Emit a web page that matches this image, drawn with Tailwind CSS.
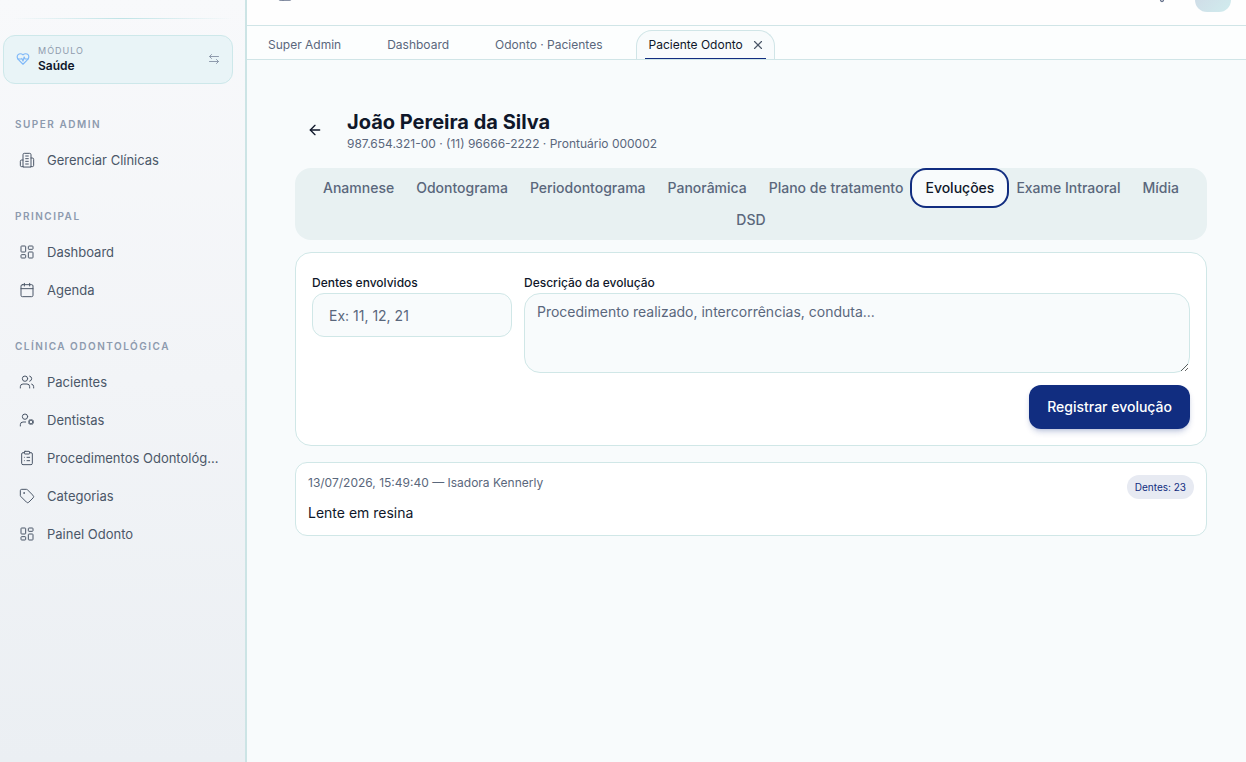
<!DOCTYPE html>
<html lang="pt-BR">
<head>
    <meta charset="UTF-8">
    <meta name="viewport" content="width=device-width, initial-scale=1.0">
    <title>Paciente Odonto</title>
    <script src="https://cdn.jsdelivr.net/npm/@tailwindcss/browser@4"></script>
</head>
<body class="font-['Inter',sans-serif] bg-[#f8fbfc] text-[#0f172a] overflow-hidden">

    <!-- Ícones reutilizados no menu -->
    <svg class="hidden">
        <symbol id="icon-dashboard" viewBox="0 0 24 24">
            <rect width="7" height="9" x="3" y="3" rx="1"/><rect width="7" height="5" x="14" y="3" rx="1"/>
            <rect width="7" height="9" x="14" y="12" rx="1"/><rect width="7" height="5" x="3" y="16" rx="1"/>
        </symbol>
    </svg>

    <div class="flex min-h-screen">
        <!-- Menu lateral -->
        <aside class="w-[247px] shrink-0 border-r-2 border-[#cce4e5] bg-linear-to-b from-[#f8f9fb] via-[#f2f4f7] to-[#ebeff3]">
            <div class="mt-[18px] mx-3 h-px bg-linear-to-r from-transparent via-[#bfe3e6] to-transparent"></div>

            <button type="button" class="mt-4 ml-[3px] flex w-[230px] items-center gap-2 rounded-xl border border-[#cde8ea] bg-[#e9f4f7] px-3 pb-[9px] pt-2 text-left">
                <svg class="size-3.5 shrink-0 text-[#7fb8f8]" viewBox="0 0 24 24" fill="none" stroke="currentColor" stroke-width="2" stroke-linecap="round" stroke-linejoin="round">
                    <path d="M19 14c1.49-1.46 3-3.21 3-5.5A5.5 5.5 0 0 0 16.5 3c-1.76 0-3 .5-4.5 2-1.5-1.5-2.74-2-4.5-2A5.5 5.5 0 0 0 2 8.5c0 2.3 1.5 4.05 3 5.5l7 7Z"/>
                    <path d="M3.22 12H9.5l.5-1 2 4.5 2-7 1.5 3.5h5.27"/>
                </svg>
                <span class="flex-1">
                    <span class="block text-[9px] leading-[14px] tracking-[1px] text-[#8f9bad]">MÓDULO</span>
                    <span class="block text-xs font-semibold leading-4">Saúde</span>
                </span>
                <svg class="size-3 text-[#8f9bad]" viewBox="0 0 24 24" fill="none" stroke="currentColor" stroke-width="2" stroke-linecap="round" stroke-linejoin="round">
                    <path d="m7 3-4 4 4 4"/><path d="M3 7h18"/><path d="m17 21 4-4-4-4"/><path d="M21 17H3"/>
                </svg>
            </button>

            <nav class="mt-8 flex flex-col gap-[30px] pl-[7px] pr-2 text-[13px] leading-5 text-[#4b5768]">
                <section>
                    <h2 class="mb-[10px] px-2 text-[10px] font-semibold leading-4 tracking-[1.5px] text-[#8d9aae]">SUPER ADMIN</h2>
                    <a href="#" class="flex h-9 items-center gap-3 px-3">
                        <svg class="size-4 shrink-0" viewBox="0 0 24 24" fill="none" stroke="currentColor" stroke-width="1.5" stroke-linecap="round" stroke-linejoin="round">
                            <path d="M6 22V4a2 2 0 0 1 2-2h8a2 2 0 0 1 2 2v18Z"/><path d="M6 12H4a2 2 0 0 0-2 2v6a2 2 0 0 0 2 2h2"/>
                            <path d="M18 9h2a2 2 0 0 1 2 2v9a2 2 0 0 1-2 2h-2"/><path d="M10 6h4"/><path d="M10 10h4"/><path d="M10 14h4"/><path d="M10 18h4"/>
                        </svg>
                        <span>Gerenciar Clínicas</span>
                    </a>
                </section>

                <section>
                    <h2 class="mb-[10px] px-2 text-[10px] font-semibold leading-4 tracking-[1.5px] text-[#8d9aae]">PRINCIPAL</h2>
                    <div class="flex flex-col gap-0.5">
                        <a href="#" class="flex h-9 items-center gap-3 px-3">
                            <svg class="size-4 shrink-0" fill="none" stroke="currentColor" stroke-width="1.5" stroke-linejoin="round"><use href="#icon-dashboard"/></svg>
                            <span>Dashboard</span>
                        </a>
                        <a href="#" class="flex h-9 items-center gap-3 px-3">
                            <svg class="size-4 shrink-0" viewBox="0 0 24 24" fill="none" stroke="currentColor" stroke-width="1.5" stroke-linecap="round" stroke-linejoin="round">
                                <path d="M8 2v4"/><path d="M16 2v4"/><rect width="18" height="18" x="3" y="4" rx="2"/><path d="M3 10h18"/>
                            </svg>
                            <span>Agenda</span>
                        </a>
                    </div>
                </section>

                <section>
                    <h2 class="mb-[10px] px-2 text-[10px] font-semibold leading-4 tracking-[1.5px] text-[#8d9aae]">CLÍNICA ODONTOLÓGICA</h2>
                    <div class="flex flex-col gap-0.5">
                        <a href="#" class="flex h-9 items-center gap-3 px-3">
                            <svg class="size-4 shrink-0" viewBox="0 0 24 24" fill="none" stroke="currentColor" stroke-width="1.5" stroke-linecap="round" stroke-linejoin="round">
                                <path d="M16 21v-2a4 4 0 0 0-4-4H6a4 4 0 0 0-4 4v2"/><circle cx="9" cy="7" r="4"/><path d="M22 21v-2a4 4 0 0 0-3-3.87"/><path d="M16 3.13a4 4 0 0 1 0 7.75"/>
                            </svg>
                            <span>Pacientes</span>
                        </a>
                        <a href="#" class="flex h-9 items-center gap-3 px-3">
                            <svg class="size-4 shrink-0" viewBox="0 0 24 24" fill="none" stroke="currentColor" stroke-width="1.5" stroke-linecap="round" stroke-linejoin="round">
                                <path d="M10 15H6a4 4 0 0 0-4 4v2"/><circle cx="9" cy="7" r="4"/><circle cx="18" cy="15" r="3"/>
                                <path d="m21.7 16.4-.9-.3"/><path d="m15.2 13.9-.9-.3"/><path d="m16.6 18.7.3-.9"/><path d="m19.1 12.2.3-.9"/><path d="m19.6 18.7-.4-1"/><path d="m16.8 12.3-.4-1"/><path d="m14.3 16.6 1-.4"/><path d="m20.7 13.8 1-.4"/>
                            </svg>
                            <span>Dentistas</span>
                        </a>
                        <a href="#" class="flex h-9 items-center gap-3 px-3">
                            <svg class="size-4 shrink-0" viewBox="0 0 24 24" fill="none" stroke="currentColor" stroke-width="1.5" stroke-linecap="round" stroke-linejoin="round">
                                <rect width="8" height="4" x="8" y="2" rx="1"/><path d="M16 4h2a2 2 0 0 1 2 2v14a2 2 0 0 1-2 2H6a2 2 0 0 1-2-2V6a2 2 0 0 1 2-2h2"/>
                                <path d="M12 11h4"/><path d="M12 16h4"/><path d="M8 11h.01"/><path d="M8 16h.01"/>
                            </svg>
                            <span class="whitespace-nowrap">Procedimentos Odontológ...</span>
                        </a>
                        <a href="#" class="flex h-9 items-center gap-3 px-3">
                            <svg class="size-4 shrink-0" viewBox="0 0 24 24" fill="none" stroke="currentColor" stroke-width="1.5" stroke-linecap="round" stroke-linejoin="round">
                                <path d="M12.586 2.586A2 2 0 0 0 11.172 2H4a2 2 0 0 0-2 2v7.172a2 2 0 0 0 .586 1.414l8.704 8.704a2.426 2.426 0 0 0 3.42 0l6.58-6.58a2.426 2.426 0 0 0 0-3.42z"/>
                                <circle cx="7.5" cy="7.5" r=".5" fill="currentColor"/>
                            </svg>
                            <span>Categorias</span>
                        </a>
                        <a href="#" class="flex h-9 items-center gap-3 px-3">
                            <svg class="size-4 shrink-0" fill="none" stroke="currentColor" stroke-width="1.5" stroke-linejoin="round"><use href="#icon-dashboard"/></svg>
                            <span>Painel Odonto</span>
                        </a>
                    </div>
                </section>
            </nav>
        </aside>

        <div class="min-w-0 flex-1">
            <!-- Barra superior, parcialmente rolada -->
            <header class="-mt-[38px] flex h-16 items-center justify-between border-b border-[#d0e5e7] bg-[#fefefe] pl-[30px] pr-[15px] text-[#64708a]">
                <button type="button" aria-label="Alternar menu">
                    <svg class="size-4" viewBox="0 0 24 24" fill="none" stroke="currentColor" stroke-width="2" stroke-linecap="round" stroke-linejoin="round">
                        <rect width="18" height="18" x="3" y="3" rx="2"/><path d="M9 3v18"/>
                    </svg>
                </button>
                <div class="flex items-center gap-6">
                    <button type="button" aria-label="Notificações">
                        <svg class="size-[18px]" viewBox="0 0 24 24" fill="none" stroke="currentColor" stroke-width="2" stroke-linecap="round" stroke-linejoin="round">
                            <path d="M6 8a6 6 0 0 1 12 0c0 7 3 9 3 9H3s3-2 3-9"/><path d="M10.3 21a1.94 1.94 0 0 0 3.4 0"/>
                        </svg>
                    </button>
                    <button type="button" aria-label="Conta" class="size-9 rounded-xl bg-linear-to-br from-[#cfd6e4] to-[#d0ecee]"></button>
                </div>
            </header>

            <!-- Abas abertas -->
            <div class="flex h-[34px] items-end gap-1 border-b border-[#d0e5e7] bg-[#fcfefe] px-2 text-xs text-[#5a677c]">
                <a href="#" class="flex h-[29px] items-center pl-[13px] pr-[29px]">Super Admin</a>
                <a href="#" class="flex h-[29px] items-center pl-[13px] pr-[29px]">Dashboard</a>
                <a href="#" class="flex h-[29px] items-center pl-[13px] pr-[29px]">Odonto · Pacientes</a>
                <div class="relative flex h-[29px] items-center gap-[7px] rounded-t-2xl border border-b-0 border-[#d0e5e7] bg-[#f8fbfc] pl-3 pr-2 text-[#0f172a]">
                    <a href="#">Paciente Odonto</a>
                    <button type="button" aria-label="Fechar aba" class="flex size-4 items-center justify-center text-[#4b5768]">
                        <svg class="size-3.5" viewBox="0 0 24 24" fill="none" stroke="currentColor" stroke-width="2" stroke-linecap="round"><path d="M18 6 6 18"/><path d="m6 6 12 12"/></svg>
                    </button>
                    <span class="absolute inset-x-2 bottom-0 h-px bg-[#112d80]"></span>
                </div>
            </div>

            <main class="pt-12 pl-12 pr-[39px]">
                <div class="flex items-center gap-3">
                    <button type="button" aria-label="Voltar" class="flex size-10 items-center justify-center">
                        <svg class="size-4" viewBox="0 0 24 24" fill="none" stroke="currentColor" stroke-width="2" stroke-linecap="round" stroke-linejoin="round"><path d="m12 19-7-7 7-7"/><path d="M19 12H5"/></svg>
                    </button>
                    <div>
                        <h1 class="text-xl font-bold">João Pereira da Silva</h1>
                        <p class="text-xs text-[#5a677c]">987.654.321-00 · (11) 96666-2222 · Prontuário 000002</p>
                    </div>
                </div>

                <div role="tablist" class="mt-4 flex flex-wrap justify-center rounded-2xl bg-[#e8f1f2] p-1 text-sm font-medium text-[#5a677c]">
                    <button type="button" role="tab" class="px-[11px] py-1.5">Anamnese</button>
                    <button type="button" role="tab" class="px-[11px] py-1.5">Odontograma</button>
                    <button type="button" role="tab" class="px-[11px] py-1.5">Periodontograma</button>
                    <button type="button" role="tab" class="px-[11px] py-1.5">Panorâmica</button>
                    <button type="button" role="tab" class="px-[11px] py-1.5">Plano de tratamento</button>
                    <button type="button" role="tab" aria-selected="true" class="rounded-xl bg-[#f8fbfc] px-[11px] py-1.5 text-[#0f172a] ring-2 ring-[#112d80] ring-offset-2 ring-offset-[#f8fbfc]">Evoluções</button>
                    <button type="button" role="tab" class="px-[11px] py-1.5">Exame Intraoral</button>
                    <button type="button" role="tab" class="px-[11px] py-1.5">Mídia</button>
                    <!-- quebra de linha antes da última aba -->
                    <div class="w-full"></div>
                    <button type="button" role="tab" class="px-[11px] py-1.5">DSD</button>
                </div>

                <!-- Nova evolução -->
                <form class="mt-3 rounded-2xl border border-[#d0e7e7] bg-white px-4 pb-4 pt-[22px]">
                    <div class="flex items-start gap-3">
                        <div class="w-[200px] shrink-0">
                            <label for="dentes" class="mb-0.5 block text-xs font-medium">Dentes envolvidos</label>
                            <input id="dentes" type="text" placeholder="Ex: 11, 12, 21" class="block h-11 w-full rounded-xl border border-[#d0e7e7] bg-[#f8fbfc] px-4 text-sm placeholder:text-[#5a677c]">
                        </div>
                        <div class="flex-1">
                            <label for="descricao" class="mb-0.5 block text-xs font-medium">Descrição da evolução</label>
                            <textarea id="descricao" placeholder="Procedimento realizado, intercorrências, conduta..." class="block h-20 w-full rounded-2xl border border-[#d0e7e7] bg-[#f8fbfc] px-3 py-2 text-sm placeholder:text-[#5a677c]"></textarea>
                        </div>
                    </div>
                    <div class="mt-3 flex justify-end">
                        <button type="button" class="h-11 rounded-xl bg-[#112d80] px-[18px] text-sm font-medium text-white shadow-md shadow-[#112d80]/20">Registrar evolução</button>
                    </div>
                </form>

                <article class="mt-4 rounded-xl border border-[#d0e7e7] bg-white p-3">
                    <div class="flex items-start justify-between">
                        <p class="text-xs text-[#5a677c]">13/07/2026, 15:49:40 — Isadora Kennerly</p>
                        <span class="flex h-6 items-center rounded-full bg-[#e7eaf2] px-2 text-[10px] text-[#112d80]">Dentes: 23</span>
                    </div>
                    <p class="mt-1 text-sm">Lente em resina</p>
                </article>
            </main>
        </div>
    </div>
</body>
</html>
